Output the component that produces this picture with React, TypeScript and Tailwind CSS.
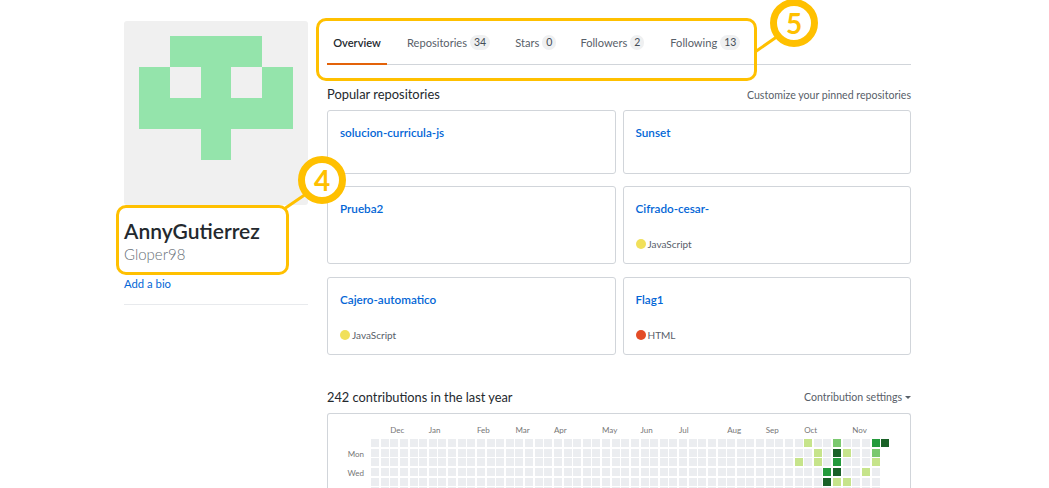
const font = "[font-family:'Lato','Open_Sans',sans-serif]"

const tabs = [
  { label: 'Repositories', count: '34', className: 'ml-[20px]' },
  { label: 'Stars', count: '0', className: 'ml-[25px]' },
  { label: 'Followers', count: '2', className: 'ml-[24px]' },
  { label: 'Following', count: '13', className: 'ml-[26px]' },
]

const months = [
  { name: 'Dec', className: 'col-start-3' },
  { name: 'Jan', className: 'col-start-7' },
  { name: 'Feb', className: 'col-start-12' },
  { name: 'Mar', className: 'col-start-16' },
  { name: 'Apr', className: 'col-start-20' },
  { name: 'May', className: 'col-start-25' },
  { name: 'Jun', className: 'col-start-29' },
  { name: 'Jul', className: 'col-start-33' },
  { name: 'Aug', className: 'col-start-38' },
  { name: 'Sep', className: 'col-start-42' },
  { name: 'Oct', className: 'col-start-46' },
  { name: 'Nov', className: 'col-start-51' },
]

// week index -> colour for each of the visible day rows
const activity: Record<string, string> = {
  '0-45': 'bg-[#c6e48b]', '0-48': 'bg-[#7bc96f]', '0-52': 'bg-[#239a3b]', '0-53': 'bg-[#196127]',
  '1-46': 'bg-[#c6e48b]', '1-48': 'bg-[#196127]', '1-49': 'bg-[#c6e48b]', '1-52': 'bg-[#7bc96f]',
  '2-44': 'bg-[#c6e48b]', '2-46': 'bg-[#c6e48b]', '2-48': 'bg-[#239a3b]', '2-52': 'bg-[#c6e48b]',
  '3-47': 'bg-[#239a3b]', '3-48': 'bg-[#196127]', '3-51': 'bg-[#c6e48b]',
  '4-47': 'bg-[#196127]', '4-48': 'bg-[#c6e48b]', '4-49': 'bg-[#c6e48b]',
}

function Identicon() {
  return (
    <div className="w-[184px] h-[184px] rounded-[3px] bg-[#f0f0f0] flex justify-center pt-[15px]">
      <svg width="154" height="124" viewBox="0 0 5 4" shapeRendering="crispEdges">
        <path d="M1 0h3v1h1v2H3v1H2V3H0V1h1zM1 1v1h1V1zM3 1v1h1V1z" fill="#94e4ab" fillRule="evenodd" />
      </svg>
    </div>
  )
}

function Sidebar() {
  return (
    <aside className="w-[184px] shrink-0 pt-[21px]">
      <Identicon />
      <div className="mt-[13px] text-[21px] leading-[26px] font-semibold text-[#24292e]">AnnyGutierrez</div>
      <div className="text-[15px] leading-[20px] font-light text-[#666e76]">Gloper98</div>
      <div className="mt-[11px] text-[11.3px] leading-[18px] text-[#0366d6]">Add a bio</div>
      <div className="mt-[11px] border-b border-[#e8eaed]" />
    </aside>
  )
}

function Tabs() {
  return (
    <nav className="h-[44px] mt-[21px] flex border-b border-[#d1d5da] text-[11.1px] leading-[18px] text-[#586069]">
      <div className="h-[44px] w-[60px] border-b-2 border-[#e36209] flex justify-center pt-[13px] font-semibold text-[#24292e]">Overview</div>
      {tabs.map((t) => (
        <div key={t.label} className={`flex items-start gap-[3px] pt-[13px] ${t.className}`}>
          <span>{t.label}</span>
          <span className="mt-[1px] px-[4px] rounded-full bg-[#eff0f1] text-[10.5px] leading-[15px] text-[#444d56]">{t.count}</span>
        </div>
      ))}
    </nav>
  )
}

function RepoCard({ name, lang, color, className }: { name: string; lang?: string; color?: string; className: string }) {
  return (
    <div className={`rounded-[3px] border border-[#d1d5da] px-[12px] pt-[12px] ${className}`}>
      <div className="text-[11.7px] leading-[18px] font-semibold text-[#0366d6]">{name}</div>
      {lang && (
        <div className="mt-[18px] flex items-center gap-[2px] text-[10px] leading-[18px] text-[#586069]">
          <span className={`w-[10px] h-[10px] rounded-full ${color}`} />
          {lang}
        </div>
      )}
    </div>
  )
}

function Calendar() {
  const cells = []
  for (let d = 0; d < 6; d++) {
    for (let w = 0; w < 54; w++) {
      if (w === 53 && d > 0) {
        cells.push(<span key={`${d}-${w}`} />)
        continue
      }
      cells.push(<span key={`${d}-${w}`} className={`h-[8px] ${activity[`${d}-${w}`] ?? 'bg-[#ebedf0]'}`} />)
    }
  }
  return (
    <div className="mt-[6px] h-[90px] rounded-t-[3px] border border-b-0 border-[#d1d5da] flex overflow-hidden">
      <div className="w-[36px] pt-[31px] text-[8px] leading-[19.3px] text-[#767676] text-right shrink-0">
        <div>Mon</div>
        <div>Wed</div>
      </div>
      <div className="ml-[7px]">
        <div className="mt-[7px] h-[18px] grid grid-cols-[repeat(54,8px)] gap-x-[1.63px] text-[8px] leading-[18px] text-[#767676]">
          {months.map((m) => (
            <span key={m.name} className={`whitespace-nowrap ${m.className}`}>{m.name}</span>
          ))}
        </div>
        <div className="grid grid-cols-[repeat(54,8px)] gap-x-[1.63px] gap-y-[1.65px]">{cells}</div>
      </div>
    </div>
  )
}

function Callouts() {
  return (
    <>
      <div className="absolute left-[316px] top-[18px] w-[441px] h-[63px] rounded-[10px] border-[3px] border-[#ffc000]" />
      <div className="absolute left-[116px] top-[205px] w-[173px] h-[70px] rounded-[10px] border-[3px] border-[#ffc000]" />
      <svg className="absolute left-0 top-0" width="1049" height="488">
        <path d="M755 52 778 36M284 209 306 194" stroke="#ffc000" strokeWidth="3" fill="none" />
      </svg>
      <div className="absolute left-[770px] top-[-1px] w-[48px] h-[48px] rounded-full border-[7px] border-[#ffc000] bg-white flex items-center justify-center text-[28px] leading-none font-bold text-[#ffc000]">5</div>
      <div className="absolute left-[298px] top-[156px] w-[48px] h-[48px] rounded-full border-[7px] border-[#ffc000] bg-white flex items-center justify-center text-[28px] leading-none font-bold text-[#ffc000]">4</div>
    </>
  )
}

export default function App() {
  return (
    <div className={`relative w-[1049px] h-[488px] overflow-hidden bg-white flex pl-[124px] ${font}`}>
      <Sidebar />
      <main className="ml-[19px] w-[584px] shrink-0">
        <Tabs />
        <div className="mt-[19px] flex items-end justify-between">
          <h2 className="text-[12.9px] leading-[20px] text-[#24292e]">Popular repositories</h2>
          <span className="text-[10.6px] leading-[18px] text-[#586069]">Customize your pinned repositories</span>
        </div>
        <div className="mt-[6px] grid grid-cols-2 gap-x-[7px] gap-y-[12px]">
          <RepoCard name="solucion-curricula-js" className="h-[64px]" />
          <RepoCard name="Sunset" className="h-[64px]" />
          <RepoCard name="Prueba2" className="h-[78px]" />
          <RepoCard name="Cifrado-cesar-" lang="JavaScript" color="bg-[#f1e05a]" className="h-[78px]" />
          <RepoCard name="Cajero-automatico" lang="JavaScript" color="bg-[#f1e05a]" className="h-[78px] mt-[1px]" />
          <RepoCard name="Flag1" lang="HTML" color="bg-[#e34c26]" className="h-[78px] mt-[1px]" />
        </div>
        <div className="mt-[32px] flex items-center justify-between">
          <h2 className="text-[12.8px] leading-[20px] text-[#24292e]">242 contributions in the last year</h2>
          <span className="text-[10.6px] leading-[18px] text-[#586069] flex items-center gap-[3px]">
            Contribution settings
            <span className="w-0 h-0 border-x-[3px] border-t-[3px] border-x-transparent border-t-[#586069]" />
          </span>
        </div>
        <Calendar />
      </main>
      <Callouts />
    </div>
  )
}
